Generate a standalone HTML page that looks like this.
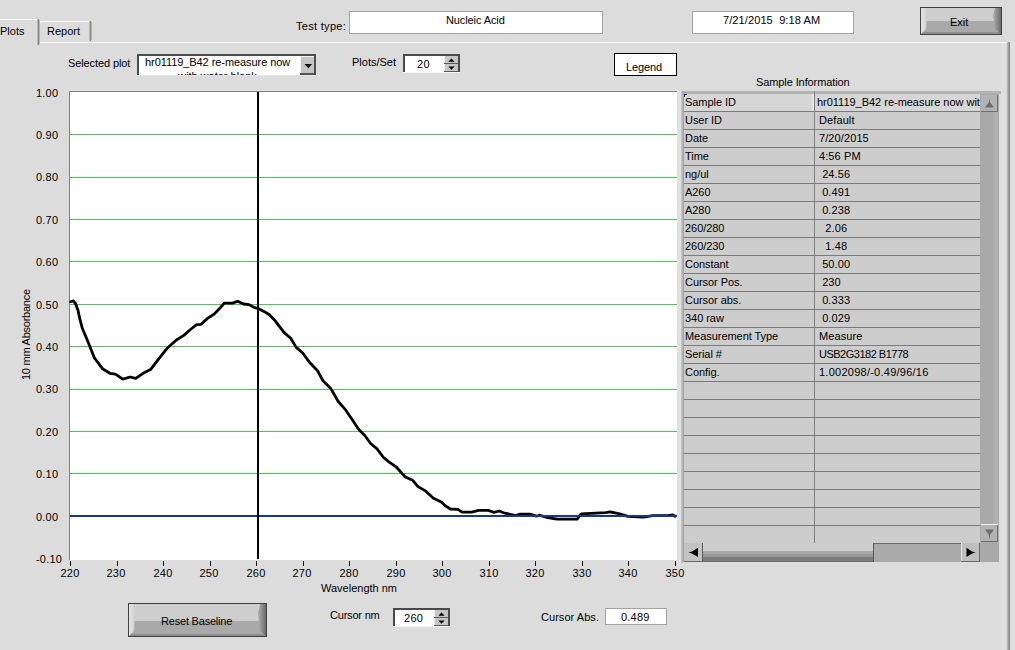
<!DOCTYPE html>
<html><head><meta charset="utf-8">
<style>
html,body{margin:0;padding:0;}
body{width:1015px;height:650px;overflow:hidden;background:#dcdcdc;position:relative;font-family:"Liberation Sans",sans-serif;font-size:11px;line-height:13px;color:#000;}
.a{position:absolute;white-space:pre;}
.r{position:absolute;}
</style></head><body>
<div class="r" style="left:1010px;top:43px;width:5px;height:607px;background:#e0e0e0;"></div>
<div class="r" style="left:0px;top:19px;width:37px;height:1px;background:#fafafa;"></div>
<div class="r" style="left:37px;top:19px;width:1px;height:26px;background:#b8b8b8;"></div>
<div class="r" style="left:38px;top:19px;width:1px;height:26px;background:#8a8a8a;"></div>
<div class="r" style="left:39px;top:20px;width:1px;height:24px;background:#b0b0b0;"></div>
<div class="a" style="left:0px;top:25px;">Plots</div>
<div class="r" style="left:40px;top:21px;width:50px;height:1px;background:#fafafa;"></div>
<div class="r" style="left:40px;top:21px;width:1px;height:2px;background:#fafafa;"></div>
<div class="r" style="left:89px;top:21px;width:1px;height:20px;background:#b8b8b8;"></div>
<div class="r" style="left:90px;top:21px;width:1px;height:20px;background:#8a8a8a;"></div>
<div class="r" style="left:91px;top:22px;width:1px;height:18px;background:#b0b0b0;"></div>
<div class="a" style="left:47px;top:25px;">Report</div>
<div class="r" style="left:40px;top:42px;width:969px;height:1px;background:#fafafa;"></div>
<div class="r" style="left:1001px;top:43px;width:6px;height:607px;background:#e0e0e0;"></div>
<div class="r" style="left:1006px;top:43px;width:1px;height:607px;background:#d4d4d4;"></div>
<div class="r" style="left:1007px;top:42px;width:1px;height:608px;background:#b8b8b8;"></div>
<div class="r" style="left:1008px;top:42px;width:1px;height:608px;background:#a0a0a0;"></div>
<div class="r" style="left:1009px;top:42px;width:1px;height:608px;background:#868686;"></div>
<div class="a" style="left:296px;top:20px;letter-spacing:0.3px">Test type:</div>
<div class="r" style="left:349px;top:11px;width:254px;height:23px;background:#fff;box-sizing:border-box;border:1px solid #a4a4a4"></div>
<div class="a" style="left:446px;top:14px;letter-spacing:-0.1px">Nucleic Acid</div>
<div class="r" style="left:692px;top:11px;width:162px;height:23px;background:#fff;box-sizing:border-box;border:1px solid #a4a4a4"></div>
<div class="a" style="left:723px;top:14px;letter-spacing:0.1px">7/21/2015  9:18 AM</div>
<div class="r" style="left:920px;top:7px;width:82px;height:28px;background:#404040;"></div>
<div class="r" style="left:921px;top:8px;width:80px;height:13px;background:#cecece;"></div>
<div class="r" style="left:921px;top:21px;width:80px;height:13px;background:#a9a9a9;"></div>
<div class="r" style="left:921px;top:32px;width:80px;height:2px;background:#8e8e8e;"></div>
<svg class="r" style="left:921px;top:8px" width="7" height="26"><defs><linearGradient id="lb920" x1="0" x2="1"><stop offset="0" stop-color="#e4e4e4"/><stop offset="1" stop-color="#d0d0d0"/></linearGradient></defs><polygon points="0,0 5,0 6,7.8 5,21 0,26" fill="url(#lb920)"/></svg>
<svg class="r" style="left:993px;top:8px" width="8" height="26"><defs><linearGradient id="rb920" x1="0" x2="1"><stop offset="0" stop-color="#b0b0b0"/><stop offset="1" stop-color="#6a6a6a"/></linearGradient></defs><polygon points="2,0 8,0 8,26 2,21 0,7.8" fill="url(#rb920)"/></svg>
<div class="a" style="left:950px;top:16px;">Exit</div>
<div class="a" style="left:68px;top:57px;letter-spacing:-0.1px">Selected plot</div>
<div class="r" style="left:137px;top:54px;width:179px;height:22px;background:#4e4e4e;"></div>
<div class="r" style="left:139px;top:56px;width:175px;height:19px;background:#fff;"></div>
<div class="r" style="left:137px;top:75px;width:179px;height:1px;background:#e4e4e4;"></div>
<div class="r" style="left:139px;top:56px;width:162px;height:19px;overflow:hidden">
<div class="a" style="left:6px;top:0px;letter-spacing:-0.07px">hr01119_B42 re-measure now</div>
<div class="a" style="left:39px;top:14px;">with water blank</div>
</div>
<div class="r" style="left:300px;top:56px;width:14px;height:18px;background:#f4f4f4;"></div>
<div class="r" style="left:301px;top:57px;width:13px;height:16px;background:#c4c4c4;"></div>
<div class="r" style="left:300px;top:73px;width:14px;height:2px;background:#555;"></div>
<svg class="r" style="left:304px;top:64px" width="9" height="5"><polygon points="0.5,0 8,0 4.25,4.2" fill="#000"/></svg>
<div class="a" style="left:352px;top:56px;">Plots/Set</div>
<div class="r" style="left:403px;top:54px;width:57px;height:19px;background:#4a4a4a;"></div>
<div class="r" style="left:405px;top:56px;width:53px;height:16px;background:#fff;"></div>
<div class="r" style="left:403px;top:72px;width:57px;height:1px;background:#f6f6f6;"></div>
<div class="r" style="left:444px;top:56px;width:14px;height:7px;background:#c6c6c6;"></div>
<div class="r" style="left:444px;top:56px;width:1px;height:7px;background:#eeeeee;"></div>
<div class="r" style="left:444px;top:63px;width:14px;height:1px;background:#5a5a5a;"></div>
<div class="r" style="left:444px;top:64px;width:14px;height:7px;background:#c6c6c6;"></div>
<div class="r" style="left:444px;top:64px;width:1px;height:7px;background:#eeeeee;"></div>
<div class="r" style="left:444px;top:71px;width:14px;height:1px;background:#5a5a5a;"></div>
<svg class="r" style="left:444px;top:56px" width="14" height="16"><polygon points="7.5,2.6 10.6,5.8 4.4,5.8" fill="#000"/><polygon points="4.4,10.6 10.6,10.6 7.5,13.8" fill="#000"/></svg>
<div class="a" style="left:417px;top:58px;letter-spacing:0.3px">20</div>
<div class="r" style="left:614px;top:53px;width:63px;height:23px;background:#fff;box-sizing:border-box;border:1px solid #000"></div>
<div class="a" style="left:626px;top:61px;letter-spacing:-0.1px">Legend</div>
<div class="a" style="left:756px;top:76px;letter-spacing:-0.1px">Sample Information</div>
<div class="r" style="left:69px;top:91px;width:608px;height:469px;background:#fff;"></div>
<div class="r" style="left:69px;top:91px;width:608px;height:1px;background:#7c7c7c;"></div>
<div class="r" style="left:69px;top:90px;width:608px;height:1px;background:#e6e6e6;"></div>
<div class="r" style="left:69px;top:91px;width:1px;height:469px;background:#7c7c7c;"></div>
<div class="r" style="left:70px;top:134px;width:607px;height:1px;background:#52c05c;"></div>
<div class="r" style="left:70px;top:177px;width:607px;height:1px;background:#52c05c;"></div>
<div class="r" style="left:70px;top:219px;width:607px;height:1px;background:#52c05c;"></div>
<div class="r" style="left:70px;top:261px;width:607px;height:1px;background:#52c05c;"></div>
<div class="r" style="left:70px;top:304px;width:607px;height:1px;background:#52c05c;"></div>
<div class="r" style="left:70px;top:346px;width:607px;height:1px;background:#52c05c;"></div>
<div class="r" style="left:70px;top:389px;width:607px;height:1px;background:#52c05c;"></div>
<div class="r" style="left:70px;top:431px;width:607px;height:1px;background:#52c05c;"></div>
<div class="r" style="left:70px;top:473px;width:607px;height:1px;background:#52c05c;"></div>
<svg class="r" style="left:0;top:0" width="1015" height="650"><path d="M70.6,301.7 L73.1,300.8 L75.5,303.5 L78.0,310.3 L79.8,318.9 L82.3,328.2 L87.7,341.0 L94.2,357.6 L102.5,368.7 L109.9,373.3 L115.4,374.2 L122.8,379.2 L130.2,377.0 L135.7,378.3 L143.1,373.3 L150.5,369.6 L159.7,357.6 L167.1,348.3 L176.4,340.0 L183.8,335.4 L191.1,329.0 L196.7,324.7 L201.1,324.3 L207.5,318.4 L214.0,314.2 L219.6,308.6 L224.2,303.1 L232.5,303.1 L237.7,301.2 L243.6,304.0 L249.1,304.6 L253.7,307.3 L258.3,308.6 L263.9,311.4 L269.4,314.7 L275.0,320.6 L284.2,332.6 L290.7,338.2 L296.2,347.4 L302.7,353.0 L310.1,363.1 L317.4,370.5 L323.2,381.1 L330.8,388.6 L338.3,401.5 L345.8,410.2 L352.3,419.8 L358.8,429.5 L365.2,436.0 L370.6,443.5 L377.1,448.9 L383.5,457.5 L388.9,461.8 L396.5,467.2 L405.1,476.9 L412.6,480.2 L418.0,486.6 L425.5,490.9 L433.1,498.0 L441.7,502.3 L445.5,505.9 L450.3,509.0 L457.9,509.3 L462.1,512.1 L471.7,512.1 L478.6,510.4 L488.3,510.4 L493.8,512.3 L499.3,511.0 L504.8,513.2 L515.9,515.5 L520.0,514.1 L529.7,514.1 L536.6,516.2 L539.3,515.2 L547.6,517.6 L557.2,519.2 L577.1,519.2 L581.2,513.9 L605.5,512.7 L610.2,511.8 L619.7,513.9 L627.9,516.3 L643.3,517.2 L652.8,515.7 L668.1,515.7 L672.9,514.9 L675.2,516.3" fill="none" stroke="#000" stroke-width="2.8" stroke-linejoin="round" stroke-linecap="round"/></svg>
<div class="r" style="left:70px;top:515px;width:607px;height:2px;background:#16388a;"></div>
<div class="r" style="left:257px;top:92px;width:2px;height:467px;background:#000;"></div>
<div class="r" style="left:70px;top:561px;width:1px;height:5px;background:#000;"></div>
<div class="a" style="left:50px;top:567px;width:40px;text-align:center;letter-spacing:0.2px">220</div>
<div class="r" style="left:117px;top:561px;width:1px;height:5px;background:#000;"></div>
<div class="a" style="left:96px;top:567px;width:40px;text-align:center;letter-spacing:0.2px">230</div>
<div class="r" style="left:163px;top:561px;width:1px;height:5px;background:#000;"></div>
<div class="a" style="left:143px;top:567px;width:40px;text-align:center;letter-spacing:0.2px">240</div>
<div class="r" style="left:210px;top:561px;width:1px;height:5px;background:#000;"></div>
<div class="a" style="left:189px;top:567px;width:40px;text-align:center;letter-spacing:0.2px">250</div>
<div class="r" style="left:256px;top:561px;width:1px;height:5px;background:#000;"></div>
<div class="a" style="left:236px;top:567px;width:40px;text-align:center;letter-spacing:0.2px">260</div>
<div class="r" style="left:303px;top:561px;width:1px;height:5px;background:#000;"></div>
<div class="a" style="left:282px;top:567px;width:40px;text-align:center;letter-spacing:0.2px">270</div>
<div class="r" style="left:349px;top:561px;width:1px;height:5px;background:#000;"></div>
<div class="a" style="left:329px;top:567px;width:40px;text-align:center;letter-spacing:0.2px">280</div>
<div class="r" style="left:396px;top:561px;width:1px;height:5px;background:#000;"></div>
<div class="a" style="left:376px;top:567px;width:40px;text-align:center;letter-spacing:0.2px">290</div>
<div class="r" style="left:442px;top:561px;width:1px;height:5px;background:#000;"></div>
<div class="a" style="left:422px;top:567px;width:40px;text-align:center;letter-spacing:0.2px">300</div>
<div class="r" style="left:489px;top:561px;width:1px;height:5px;background:#000;"></div>
<div class="a" style="left:469px;top:567px;width:40px;text-align:center;letter-spacing:0.2px">310</div>
<div class="r" style="left:535px;top:561px;width:1px;height:5px;background:#000;"></div>
<div class="a" style="left:515px;top:567px;width:40px;text-align:center;letter-spacing:0.2px">320</div>
<div class="r" style="left:582px;top:561px;width:1px;height:5px;background:#000;"></div>
<div class="a" style="left:562px;top:567px;width:40px;text-align:center;letter-spacing:0.2px">330</div>
<div class="r" style="left:628px;top:561px;width:1px;height:5px;background:#000;"></div>
<div class="a" style="left:608px;top:567px;width:40px;text-align:center;letter-spacing:0.2px">340</div>
<div class="r" style="left:675px;top:561px;width:1px;height:5px;background:#000;"></div>
<div class="a" style="left:655px;top:567px;width:40px;text-align:center;letter-spacing:0.2px">350</div>
<div class="a" style="left:36px;top:87px;letter-spacing:0.2px">1.00</div>
<div class="a" style="left:36px;top:129px;letter-spacing:0.2px">0.90</div>
<div class="a" style="left:36px;top:171px;letter-spacing:0.2px">0.80</div>
<div class="a" style="left:36px;top:214px;letter-spacing:0.2px">0.70</div>
<div class="a" style="left:36px;top:256px;letter-spacing:0.2px">0.60</div>
<div class="a" style="left:36px;top:299px;letter-spacing:0.2px">0.50</div>
<div class="a" style="left:36px;top:341px;letter-spacing:0.2px">0.40</div>
<div class="a" style="left:36px;top:383px;letter-spacing:0.2px">0.30</div>
<div class="a" style="left:36px;top:426px;letter-spacing:0.2px">0.20</div>
<div class="a" style="left:36px;top:468px;letter-spacing:0.2px">0.10</div>
<div class="a" style="left:36px;top:511px;letter-spacing:0.2px">0.00</div>
<div class="a" style="left:36px;top:553px;letter-spacing:0.2px">-0.10</div>
<div class="a" style="left:321px;top:582px;">Wavelength nm</div>
<div class="a" style="left:20px;top:380px;transform-origin:0 0;transform:rotate(-90deg);letter-spacing:-0.25px">10 mm Absorbance</div>
<div class="r" style="left:681px;top:91px;width:320px;height:3px;background:#b2b2b2;"></div>
<div class="r" style="left:677px;top:91px;width:4px;height:472px;background:#e0e0e0;"></div>
<div class="r" style="left:681px;top:91px;width:1px;height:472px;background:#c4c4c4;"></div>
<div class="r" style="left:682px;top:91px;width:1px;height:472px;background:#b4b4b4;"></div>
<div class="r" style="left:683px;top:91px;width:1px;height:471px;background:#a4a4a4;"></div>
<div class="r" style="left:684px;top:94px;width:296px;height:449px;background:#cdcdcd;"></div>
<div class="r" style="left:684px;top:94px;width:130px;height:17px;background:#d6d6d6;"></div>
<div class="r" style="left:812px;top:94px;width:2px;height:17px;background:#e6e6e6;"></div>
<div class="r" style="left:815px;top:94px;width:165px;height:17px;background:#d6d6d6;"></div>
<div class="r" style="left:684px;top:93px;width:296px;height:450px;overflow:hidden">
<div class="r" style="left:0px;top:18px;width:296px;height:1px;background:#7a7a7a;"></div>
<div class="r" style="left:0px;top:36px;width:296px;height:1px;background:#7a7a7a;"></div>
<div class="r" style="left:0px;top:54px;width:296px;height:1px;background:#7a7a7a;"></div>
<div class="r" style="left:0px;top:72px;width:296px;height:1px;background:#7a7a7a;"></div>
<div class="r" style="left:0px;top:90px;width:296px;height:1px;background:#7a7a7a;"></div>
<div class="r" style="left:0px;top:108px;width:296px;height:1px;background:#7a7a7a;"></div>
<div class="r" style="left:0px;top:126px;width:296px;height:1px;background:#7a7a7a;"></div>
<div class="r" style="left:0px;top:144px;width:296px;height:1px;background:#7a7a7a;"></div>
<div class="r" style="left:0px;top:162px;width:296px;height:1px;background:#7a7a7a;"></div>
<div class="r" style="left:0px;top:180px;width:296px;height:1px;background:#7a7a7a;"></div>
<div class="r" style="left:0px;top:198px;width:296px;height:1px;background:#7a7a7a;"></div>
<div class="r" style="left:0px;top:216px;width:296px;height:1px;background:#7a7a7a;"></div>
<div class="r" style="left:0px;top:234px;width:296px;height:1px;background:#7a7a7a;"></div>
<div class="r" style="left:0px;top:252px;width:296px;height:1px;background:#7a7a7a;"></div>
<div class="r" style="left:0px;top:270px;width:296px;height:1px;background:#7a7a7a;"></div>
<div class="r" style="left:0px;top:288px;width:296px;height:1px;background:#7a7a7a;"></div>
<div class="r" style="left:0px;top:306px;width:296px;height:1px;background:#7a7a7a;"></div>
<div class="r" style="left:0px;top:324px;width:296px;height:1px;background:#7a7a7a;"></div>
<div class="r" style="left:0px;top:342px;width:296px;height:1px;background:#7a7a7a;"></div>
<div class="r" style="left:0px;top:360px;width:296px;height:1px;background:#7a7a7a;"></div>
<div class="r" style="left:0px;top:378px;width:296px;height:1px;background:#7a7a7a;"></div>
<div class="r" style="left:0px;top:396px;width:296px;height:1px;background:#7a7a7a;"></div>
<div class="r" style="left:0px;top:414px;width:296px;height:1px;background:#7a7a7a;"></div>
<div class="r" style="left:0px;top:432px;width:296px;height:1px;background:#7a7a7a;"></div>
<div class="a" style="left:1px;top:3px;letter-spacing:-0.05px">Sample ID</div>
<div class="a" style="left:133px;top:3px;letter-spacing:-0.02px">hr01119_B42 re-measure now with water blank</div>
<div class="a" style="left:1px;top:21px;letter-spacing:-0.05px">User ID</div>
<div class="a" style="left:135px;top:21px;letter-spacing:0.1px">Default</div>
<div class="a" style="left:1px;top:39px;letter-spacing:-0.05px">Date</div>
<div class="a" style="left:135px;top:39px;letter-spacing:0.1px">7/20/2015</div>
<div class="a" style="left:1px;top:57px;letter-spacing:-0.05px">Time</div>
<div class="a" style="left:135px;top:57px;letter-spacing:0.1px">4:56 PM</div>
<div class="a" style="left:1px;top:75px;letter-spacing:-0.05px">ng/ul</div>
<div class="a" style="left:135px;top:75px;letter-spacing:0.1px"> 24.56</div>
<div class="a" style="left:1px;top:93px;letter-spacing:-0.05px">A260</div>
<div class="a" style="left:135px;top:93px;letter-spacing:0.1px"> 0.491</div>
<div class="a" style="left:1px;top:111px;letter-spacing:-0.05px">A280</div>
<div class="a" style="left:135px;top:111px;letter-spacing:0.1px"> 0.238</div>
<div class="a" style="left:1px;top:129px;letter-spacing:-0.05px">260/280</div>
<div class="a" style="left:135px;top:129px;letter-spacing:0.1px">  2.06</div>
<div class="a" style="left:1px;top:147px;letter-spacing:-0.05px">260/230</div>
<div class="a" style="left:135px;top:147px;letter-spacing:0.1px">  1.48</div>
<div class="a" style="left:1px;top:165px;letter-spacing:-0.05px">Constant</div>
<div class="a" style="left:135px;top:165px;letter-spacing:0.1px"> 50.00</div>
<div class="a" style="left:1px;top:183px;letter-spacing:-0.05px">Cursor Pos.</div>
<div class="a" style="left:135px;top:183px;letter-spacing:0.1px"> 230</div>
<div class="a" style="left:1px;top:201px;letter-spacing:-0.05px">Cursor abs.</div>
<div class="a" style="left:135px;top:201px;letter-spacing:0.1px"> 0.333</div>
<div class="a" style="left:1px;top:219px;letter-spacing:-0.05px">340 raw</div>
<div class="a" style="left:135px;top:219px;letter-spacing:0.1px"> 0.029</div>
<div class="a" style="left:1px;top:237px;letter-spacing:-0.05px">Measurement Type</div>
<div class="a" style="left:135px;top:237px;letter-spacing:0.1px">Measure</div>
<div class="a" style="left:1px;top:255px;letter-spacing:-0.05px">Serial #</div>
<div class="a" style="left:135px;top:255px;letter-spacing:-0.5px">USB2G3182 B1778</div>
<div class="a" style="left:1px;top:273px;letter-spacing:-0.05px">Config.</div>
<div class="a" style="left:135px;top:273px;letter-spacing:0.25px">1.002098/-0.49/96/16</div>
<div class="r" style="left:130px;top:0px;width:1px;height:450px;background:#7a7a7a;"></div>
<div class="r" style="left:0px;top:1px;width:3px;height:1px;background:#12125e;"></div>
<div class="r" style="left:0px;top:1px;width:1px;height:3px;background:#12125e;"></div>
</div>
<div class="r" style="left:814px;top:91px;width:1px;height:3px;background:#8a8a8a;"></div>
<div class="r" style="left:980px;top:94px;width:19px;height:449px;background:#a9a9a9;"></div>
<div class="r" style="left:994px;top:112px;width:4px;height:412px;background:#b1b1b1;"></div>
<div class="r" style="left:981px;top:95px;width:17px;height:17px;background:#b3b3b3;"></div>
<div class="r" style="left:981px;top:111px;width:17px;height:1px;background:#6e6e6e;"></div>
<div class="r" style="left:997px;top:95px;width:1px;height:17px;background:#6e6e6e;"></div>
<svg class="r" style="left:981px;top:95px" width="17" height="17"><polygon points="8.5,3.5 9.2,7.5 13,12.5 4,12.5 7.8,7.5" fill="#6c6c6c"/></svg>
<div class="r" style="left:981px;top:525px;width:17px;height:17px;background:#b3b3b3;"></div>
<div class="r" style="left:981px;top:524px;width:17px;height:1px;background:#eeeeee;"></div>
<div class="r" style="left:997px;top:525px;width:1px;height:17px;background:#6e6e6e;"></div>
<div class="r" style="left:981px;top:541px;width:17px;height:1px;background:#6e6e6e;"></div>
<svg class="r" style="left:981px;top:525px" width="17" height="17"><polygon points="4,4.5 13,4.5 9.2,9.5 8.8,13.5 8.2,13.5 7.8,9.5" fill="#6c6c6c"/></svg>
<div class="r" style="left:980px;top:543px;width:19px;height:18px;background:#a9a9a9;"></div>
<div class="r" style="left:684px;top:543px;width:296px;height:19px;background:#aaaaaa;"></div>
<div class="r" style="left:684px;top:543px;width:19px;height:19px;background:#c2c2c2;"></div>
<div class="r" style="left:702px;top:543px;width:1px;height:19px;background:#5c5c5c;"></div>
<div class="r" style="left:684px;top:561px;width:19px;height:1px;background:#6a6a6a;"></div>
<svg class="r" style="left:684px;top:543px" width="19" height="19"><polygon points="4.5,9.5 8,8.6 14,4.7 14,14 8,10.4" fill="#000"/></svg>
<div class="r" style="left:703px;top:543px;width:170px;height:8px;background:#cecece;"></div>
<div class="r" style="left:703px;top:551px;width:170px;height:3px;background:#a9a9a9;"></div>
<div class="r" style="left:703px;top:554px;width:170px;height:3px;background:#999999;"></div>
<div class="r" style="left:703px;top:557px;width:170px;height:4px;background:#7c7c7c;"></div>
<div class="r" style="left:703px;top:561px;width:170px;height:1px;background:#6a6a6a;"></div>
<div class="r" style="left:873px;top:543px;width:1px;height:19px;background:#555555;"></div>
<div class="r" style="left:874px;top:543px;width:87px;height:1px;background:#6a6a6a;"></div>
<div class="r" style="left:961px;top:543px;width:19px;height:19px;background:#bebebe;"></div>
<div class="r" style="left:961px;top:543px;width:1px;height:19px;background:#e6e6e6;"></div>
<div class="r" style="left:979px;top:543px;width:1px;height:19px;background:#6a6a6a;"></div>
<div class="r" style="left:961px;top:561px;width:19px;height:1px;background:#6a6a6a;"></div>
<svg class="r" style="left:961px;top:543px" width="19" height="19"><polygon points="14.5,9.5 11,10.4 5.5,14 5.5,4.7 11,8.6" fill="#000"/></svg>
<div class="r" style="left:980px;top:543px;width:19px;height:19px;background:#a9a9a9;"></div>
<div class="r" style="left:128px;top:603px;width:139px;height:34px;background:#404040;"></div>
<div class="r" style="left:129px;top:604px;width:137px;height:17px;background:#cecece;"></div>
<div class="r" style="left:129px;top:621px;width:137px;height:15px;background:#a9a9a9;"></div>
<div class="r" style="left:129px;top:634px;width:137px;height:2px;background:#8e8e8e;"></div>
<svg class="r" style="left:129px;top:604px" width="7" height="32"><defs><linearGradient id="lb128" x1="0" x2="1"><stop offset="0" stop-color="#e4e4e4"/><stop offset="1" stop-color="#d0d0d0"/></linearGradient></defs><polygon points="0,0 5,0 6,9.6 5,27 0,32" fill="url(#lb128)"/></svg>
<svg class="r" style="left:258px;top:604px" width="8" height="32"><defs><linearGradient id="rb128" x1="0" x2="1"><stop offset="0" stop-color="#b0b0b0"/><stop offset="1" stop-color="#6a6a6a"/></linearGradient></defs><polygon points="2,0 8,0 8,32 2,27 0,9.6" fill="url(#rb128)"/></svg>
<div class="a" style="left:161px;top:615px;letter-spacing:-0.2px">Reset Baseline</div>
<div class="a" style="left:330px;top:609px;letter-spacing:-0.2px">Cursor nm</div>
<div class="r" style="left:393px;top:608px;width:57px;height:19px;background:#4a4a4a;"></div>
<div class="r" style="left:395px;top:610px;width:53px;height:16px;background:#fff;"></div>
<div class="r" style="left:393px;top:626px;width:57px;height:1px;background:#f6f6f6;"></div>
<div class="r" style="left:434px;top:610px;width:14px;height:7px;background:#c6c6c6;"></div>
<div class="r" style="left:434px;top:610px;width:1px;height:7px;background:#eeeeee;"></div>
<div class="r" style="left:434px;top:617px;width:14px;height:1px;background:#5a5a5a;"></div>
<div class="r" style="left:434px;top:618px;width:14px;height:7px;background:#c6c6c6;"></div>
<div class="r" style="left:434px;top:618px;width:1px;height:7px;background:#eeeeee;"></div>
<div class="r" style="left:434px;top:625px;width:14px;height:1px;background:#5a5a5a;"></div>
<svg class="r" style="left:434px;top:610px" width="14" height="16"><polygon points="7.5,2.6 10.6,5.8 4.4,5.8" fill="#000"/><polygon points="4.4,10.6 10.6,10.6 7.5,13.8" fill="#000"/></svg>
<div class="a" style="left:404px;top:612px;letter-spacing:0.3px">260</div>
<div class="a" style="left:541px;top:611px;letter-spacing:0.05px">Cursor Abs.</div>
<div class="r" style="left:605px;top:608px;width:62px;height:17px;background:#fff;box-sizing:border-box;border:1px solid #a4a4a4"></div>
<div class="a" style="left:621px;top:611px;letter-spacing:0.2px">0.489</div>
</body></html>
